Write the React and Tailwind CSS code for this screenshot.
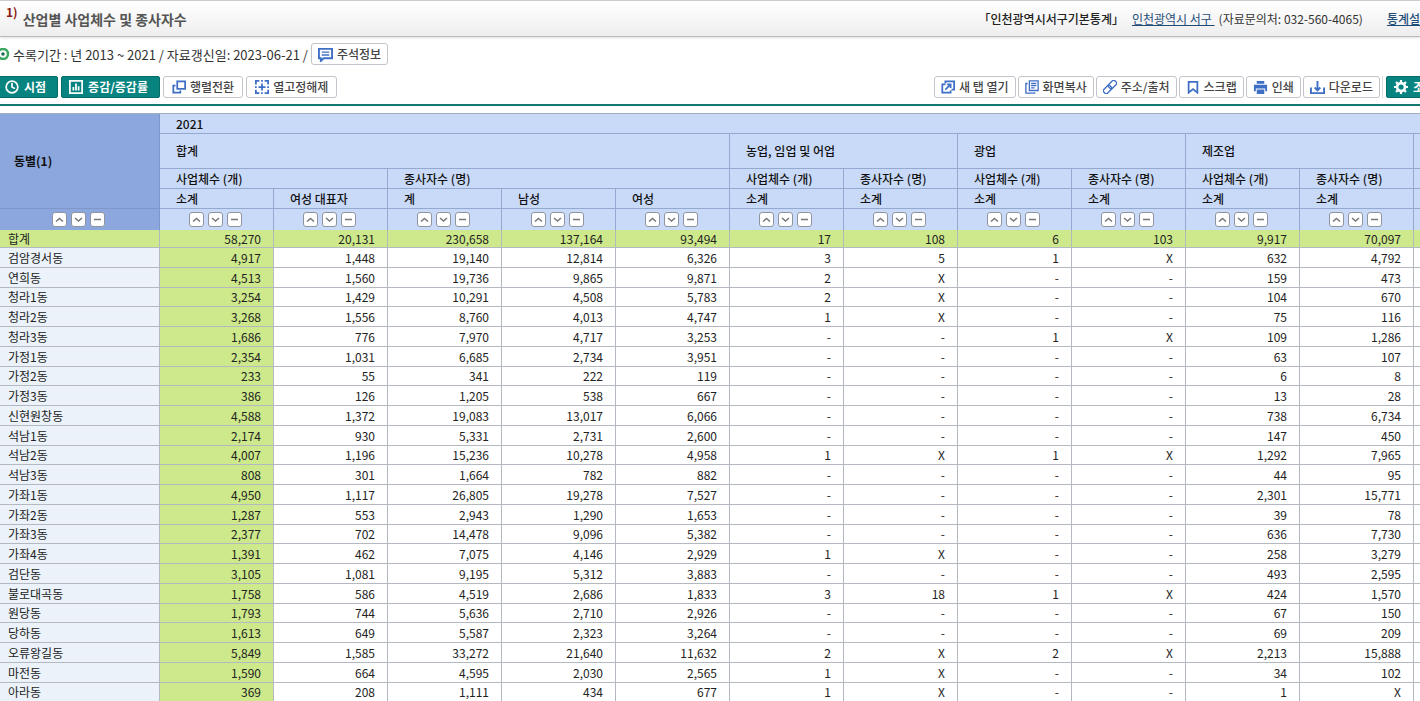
import React from 'react';
import { Clock } from 'lucide-react';

const svgProps = {
  viewBox: '0 0 16 16',
  fill: 'none',
  stroke: 'currentColor',
  strokeWidth: 2,
  'aria-hidden': true,
};

const ChartIcon = () => (
  <svg {...svgProps} className="h-[14px] w-[14px] shrink-0">
    <rect x="1" y="1" width="14" height="14" />
    <path d="M5 12V8M8 12V4M11 12V7" />
  </svg>
);

const NoteIcon = () => (
  <svg {...svgProps} className="h-[15px] w-[15px] shrink-0">
    <path d="M1 2h14v10H6l-3 3v-3H1z" />
    <path d="M4 5.500h8M4 8.500h8" strokeWidth="1.500" />
  </svg>
);

const SwapIcon = () => (
  <svg {...svgProps} className="h-[14px] w-[14px] shrink-0">
    <path d="M6 1.500h9v8.500H6z" />
    <path d="M4 6.500H1.500v8H9.500V12" />
  </svg>
);

const UnfreezeIcon = () => (
  <svg {...svgProps} className="h-[14px] w-[14px] shrink-0">
    <path d="M1 5V1h4M11 1h4v4M15 11v4h-4M5 15H1v-4" />
    <path d="M8 4v8M4 8h8M7 1h2M7 15h2M1 7v2M15 7v2" />
  </svg>
);

const NewTabIcon = () => (
  <svg {...svgProps} className="h-[14px] w-[14px] shrink-0">
    <path d="M5 4V1.500h10v9.500h-3" />
    <path d="M5 5H1.500v9.500H11V12" />
    <path d="M5 11l6-6M7 5h4v4" />
  </svg>
);

const CopyIcon = () => (
  <svg {...svgProps} className="h-[14px] w-[14px] shrink-0" strokeWidth="1.500">
    <path d="M5 1h10v11H5z" />
    <path d="M3 4H1v11h10v-1M7 4h6M7 6.500h6M7 9h4" />
  </svg>
);

const LinkIcon = () => (
  <svg {...svgProps} className="h-[14px] w-[14px] shrink-0" strokeWidth="1.500">
    <g transform="rotate(-45 8 8)">
      <rect x="-1" y="5" width="10" height="6" rx="2" />
      <rect x="7" y="5" width="10" height="6" rx="2" />
    </g>
  </svg>
);

const BookmarkIcon = () => (
  <svg {...svgProps} className="h-[14px] w-[14px] shrink-0">
    <path d="M3 2h10v12.500l-5-4-5 4z" />
  </svg>
);

const PrintIcon = () => (
  <svg viewBox="0 0 16 16" fill="currentColor" aria-hidden="true" className="h-[15px] w-[15px] shrink-0">
    <path d="M4 1h8v3H4zM1 5h14v7h-2V9H3v3H1zM4 10h8v5H4z" />
  </svg>
);

const DownloadIcon = () => (
  <svg {...svgProps} className="h-[15px] w-[15px] shrink-0">
    <path d="M1 8v6h14V8M8 1v10M5 8l3 3 3-3" />
  </svg>
);

const GearIcon = () => (
  <svg {...svgProps} className="h-[14px] w-[14px] shrink-0">
    <circle cx="8" cy="8" r="4.500" strokeWidth="3" />
    <path d="M8 0v3M8 13v3M0 8h3M13 8h3M2.300 2.300l2 2M11.700 11.700l2 2M13.700 2.300l-2 2M4.300 11.700l-2 2" strokeWidth="2.500" />
  </svg>
);

const ToolButton = ({ icon, compact = false, children }) => (
  <button
    type="button"
    className={`flex h-[22px] shrink-0 items-center gap-1 rounded-[3px] border border-[#c3c5cd] bg-white text-[12px] font-medium whitespace-nowrap text-[#444] ${compact ? 'px-[6px]' : 'px-2'}`}
  >
    <span className="text-[#3f6fc4]">{icon}</span>
    {children}
  </button>
);

const PrimaryButton = ({ icon, children }) => (
  <button
    type="button"
    className="flex h-[22px] shrink-0 items-center gap-[5px] rounded-[2px] border border-[#056d68] bg-[#078480] pr-[11px] pl-[7px] text-[12px] font-bold whitespace-nowrap text-white"
  >
    {icon}
    {children}
  </button>
);

const SORTS = [
  { label: '오름차순', d: 'M3 8.500l3.500-3 3.500 3' },
  { label: '내림차순', d: 'M3 5l3.500 3L10 5' },
  { label: '정렬 해제', d: 'M3 6.500h7' },
];

const SortButtons = () => (
  <div className="flex justify-center gap-1 pr-[2px]">
    {SORTS.map((sort) => (
      <button
        key={sort.label}
        type="button"
        aria-label={sort.label}
        className="h-[15px] w-[15px] rounded-[3px] border border-[#8e959f] bg-white text-[#777]"
      >
        <svg viewBox="0 0 13 13" fill="none" stroke="currentColor" strokeWidth="1.500" className="h-[13px] w-[13px]">
          <path d={sort.d} />
        </svg>
      </button>
    ))}
  </div>
);

const LEAVES = ['소계', '여성 대표자', '계', '남성', '여성', '소계', '소계', '소계', '소계', '소계', '소계'];

const ROWS = [
  ['합계', '58,270', '20,131', '230,658', '137,164', '93,494', '17', '108', '6', '103', '9,917', '70,097'],
  ['검암경서동', '4,917', '1,448', '19,140', '12,814', '6,326', '3', '5', '1', 'X', '632', '4,792'],
  ['연희동', '4,513', '1,560', '19,736', '9,865', '9,871', '2', 'X', '-', '-', '159', '473'],
  ['청라1동', '3,254', '1,429', '10,291', '4,508', '5,783', '2', 'X', '-', '-', '104', '670'],
  ['청라2동', '3,268', '1,556', '8,760', '4,013', '4,747', '1', 'X', '-', '-', '75', '116'],
  ['청라3동', '1,686', '776', '7,970', '4,717', '3,253', '-', '-', '1', 'X', '109', '1,286'],
  ['가정1동', '2,354', '1,031', '6,685', '2,734', '3,951', '-', '-', '-', '-', '63', '107'],
  ['가정2동', '233', '55', '341', '222', '119', '-', '-', '-', '-', '6', '8'],
  ['가정3동', '386', '126', '1,205', '538', '667', '-', '-', '-', '-', '13', '28'],
  ['신현원창동', '4,588', '1,372', '19,083', '13,017', '6,066', '-', '-', '-', '-', '738', '6,734'],
  ['석남1동', '2,174', '930', '5,331', '2,731', '2,600', '-', '-', '-', '-', '147', '450'],
  ['석남2동', '4,007', '1,196', '15,236', '10,278', '4,958', '1', 'X', '1', 'X', '1,292', '7,965'],
  ['석남3동', '808', '301', '1,664', '782', '882', '-', '-', '-', '-', '44', '95'],
  ['가좌1동', '4,950', '1,117', '26,805', '19,278', '7,527', '-', '-', '-', '-', '2,301', '15,771'],
  ['가좌2동', '1,287', '553', '2,943', '1,290', '1,653', '-', '-', '-', '-', '39', '78'],
  ['가좌3동', '2,377', '702', '14,478', '9,096', '5,382', '-', '-', '-', '-', '636', '7,730'],
  ['가좌4동', '1,391', '462', '7,075', '4,146', '2,929', '1', 'X', '-', '-', '258', '3,279'],
  ['검단동', '3,105', '1,081', '9,195', '5,312', '3,883', '-', '-', '-', '-', '493', '2,595'],
  ['불로대곡동', '1,758', '586', '4,519', '2,686', '1,833', '3', '18', '1', 'X', '424', '1,570'],
  ['원당동', '1,793', '744', '5,636', '2,710', '2,926', '-', '-', '-', '-', '67', '150'],
  ['당하동', '1,613', '649', '5,587', '2,323', '3,264', '-', '-', '-', '-', '69', '209'],
  ['오류왕길동', '5,849', '1,585', '33,272', '21,640', '11,632', '2', 'X', '2', 'X', '2,213', '15,888'],
  ['마전동', '1,590', '664', '4,595', '2,030', '2,565', '1', 'X', '-', '-', '34', '102'],
  ['아라동', '369', '208', '1,111', '434', '677', '1', 'X', '-', '-', '1', 'X'],
];

const HeadCell = ({ className = '', ...props }) => (
  <th
    className={`border-r border-b border-[#94a8d0] bg-[#c9daf8] px-4 text-left font-medium ${className}`}
    {...props}
  />
);

const StatTable = () => (
  <table className="w-full table-fixed border-separate border-spacing-0 border-t border-[#a3adbf] text-[12px] leading-4 whitespace-nowrap text-[#222]">
    <colgroup>
      <col className="w-40" />
      {LEAVES.map((_, i) => (
        <col key={i} className="w-[114px]" />
      ))}
      <col />
    </colgroup>
    <thead className="text-[#111]">
      <tr className="h-5">
        <th rowSpan={4} className="border-r border-b border-[#7f97c8] bg-[#8ba7dd] px-[14px] text-left font-bold">
          동별(1)
        </th>
        <HeadCell colSpan={12} className="border-r-0!">2021</HeadCell>
      </tr>
      <tr className="h-[35px]">
        <HeadCell colSpan={5}>합계</HeadCell>
        <HeadCell colSpan={2}>농업, 임업 및 어업</HeadCell>
        <HeadCell colSpan={2}>광업</HeadCell>
        <HeadCell colSpan={2}>제조업</HeadCell>
        <td className="border-b border-[#94a8d0] bg-[#c9daf8]" />
      </tr>
      <tr className="h-5">
        <HeadCell colSpan={2}>사업체수 (개)</HeadCell>
        <HeadCell colSpan={3}>종사자수 (명)</HeadCell>
        {[0, 1, 2].map((i) => (
          <React.Fragment key={i}>
            <HeadCell>사업체수 (개)</HeadCell>
            <HeadCell>종사자수 (명)</HeadCell>
          </React.Fragment>
        ))}
        <td className="border-b border-[#94a8d0] bg-[#c9daf8]" />
      </tr>
      <tr className="h-5">
        {LEAVES.map((leaf, i) => (
          <HeadCell key={i}>{leaf}</HeadCell>
        ))}
        <td className="border-b border-[#94a8d0] bg-[#c9daf8]" />
      </tr>
      <tr className="h-[21px]">
        <td className="border-r border-[#7f97c8] bg-[#8ba7dd]">
          <SortButtons />
        </td>
        {LEAVES.map((_, i) => (
          <td key={i} className="border-r border-[#94a8d0] bg-[#c9daf8]">
            <SortButtons />
          </td>
        ))}
        <td className="bg-[#c9daf8]" />
      </tr>
    </thead>
    <tbody>
      {ROWS.map(([name, ...values], rowIndex) => {
        const isTotal = rowIndex === 0;
        return (
          <tr key={name} className={isTotal ? 'h-[18px]' : 'h-5 nth-[4n]:h-[19px]'}>
            <th
              scope="row"
              className={`border-r border-b border-[#b4b8c0] px-2 text-left font-normal ${isTotal ? 'bg-[#cde98b]' : 'bg-[#ebf2f9]'}`}
            >
              {name}
            </th>
            {values.map((value, i) => (
              <td
                key={i}
                className={`border-r border-b border-[#b4b8c0] pr-3 text-right ${isTotal || i === 0 ? 'bg-[#cde98b]' : 'bg-white'}`}
              >
                {value}
              </td>
            ))}
            <td className={`border-b border-[#b4b8c0] ${isTotal ? 'bg-[#cde98b]' : 'bg-white'}`} />
          </tr>
        );
      })}
    </tbody>
  </table>
);

export default function App() {
  return (
    <div className="h-screen overflow-hidden bg-white font-['Noto_Sans_CJK_KR','Noto_Sans',sans-serif] text-[#333]">
      {/* Title bar */}
      <header className="flex h-[37px] items-center justify-between border-t border-b border-t-[#ccc] border-b-[#bbb] bg-linear-to-b from-white to-[#eee] pl-[6px] shadow-sm">
        <h1 className="flex gap-[5px] text-[14px] leading-[26px] font-bold whitespace-nowrap text-[#555]">
          <span className="text-[12px] leading-3 text-[#8b1a10]">1)</span>
          산업별 사업체수 및 종사자수
        </h1>
        <div className="flex shrink-0 text-[12px] whitespace-nowrap">
          <strong className="mr-2 font-medium text-[#222]">「인천광역시서구기본통계」</strong>
          <a href="#org" className="text-[#1f4e79] underline">인천광역시 서구&nbsp;</a>
          <span className="ml-1">(자료문의처: 032-560-4065)</span>
          <a href="#info" className="ml-6 font-medium text-[#1f4e79] underline">통계설</a>
        </div>
      </header>

      {/* Period and update date */}
      <div className="mt-[6px] flex h-[22px] items-center gap-[3px] text-[13px] whitespace-nowrap">
        <svg viewBox="0 0 10 12" fill="none" className="h-3 w-[10px]" aria-hidden="true">
          <circle cx="3" cy="6" r="5" stroke="#3aa760" strokeWidth="2.500" />
          <circle cx="3" cy="6" r="1.800" fill="#246b52" />
        </svg>
        <p className="pt-[2px]">수록기간 : 년 2013 ~ 2021 / 자료갱신일: 2023-06-21 /</p>
        <ToolButton icon={<NoteIcon />} compact>주석정보</ToolButton>
      </div>

      {/* Toolbar */}
      <div className="mt-[11px] flex justify-between border-b-2 border-[#11776f] pb-[6px]">
        <div className="-ml-[3px] flex gap-[3px]">
          <PrimaryButton icon={<Clock className="h-[14px] w-[14px]" strokeWidth={3} />}>시점</PrimaryButton>
          <PrimaryButton icon={<ChartIcon />}>증감/증감률</PrimaryButton>
          <ToolButton icon={<SwapIcon />}>행렬전환</ToolButton>
          <ToolButton icon={<UnfreezeIcon />}>열고정해제</ToolButton>
        </div>
        <div className="-mr-4 flex gap-[2px]">
          <ToolButton icon={<NewTabIcon />} compact>새 탭 열기</ToolButton>
          <ToolButton icon={<CopyIcon />} compact>화면복사</ToolButton>
          <ToolButton icon={<LinkIcon />} compact>주소/출처</ToolButton>
          <ToolButton icon={<BookmarkIcon />} compact>스크랩</ToolButton>
          <ToolButton icon={<PrintIcon />} compact>인쇄</ToolButton>
          <ToolButton icon={<DownloadIcon />} compact>다운로드</ToolButton>
          <div className="border-l border-[#ddd] pl-[3px]">
            <PrimaryButton icon={<GearIcon />}>조</PrimaryButton>
          </div>
        </div>
      </div>

      <main className="mt-[7px]">
        <StatTable />
      </main>
    </div>
  );
}
